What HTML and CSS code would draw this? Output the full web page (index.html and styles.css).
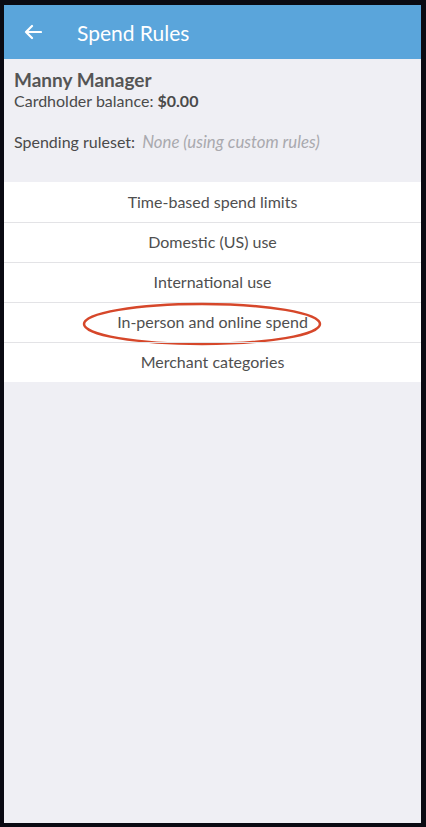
FILE: index.html
```html
<!DOCTYPE html>
<html>
<head>
<meta charset="utf-8">
<link rel="stylesheet" href="styles.css">
</head>
<body>
<div class="screen">
  <header class="topbar">
    <svg class="back" width="18" height="16" viewBox="0 0 18 16" fill="none" stroke="#fff" stroke-width="2.2" stroke-linecap="round" stroke-linejoin="round">
      <path d="M17 8H2M8 2L2 8l6 6"/>
    </svg>
    <h1 class="title">Spend Rules</h1>
  </header>
  <section class="info">
    <div class="name">Manny Manager</div>
    <div class="balance">Cardholder balance: <b>$0.00</b></div>
    <div class="ruleset">Spending ruleset: <i>None (using custom rules)</i></div>
  </section>
  <ul class="rules">
    <li>Time-based spend limits</li>
    <li>Domestic (US) use</li>
    <li>International use</li>
    <li class="circled">In-person and online spend
      <svg class="ellipse" width="246" height="46" viewBox="0 0 246 46"><ellipse cx="122" cy="23" rx="118" ry="20" fill="none" stroke="#d6472a" stroke-width="2.5"/></svg>
    </li>
    <li>Merchant categories</li>
  </ul>
</div>
</body>
</html>
```
FILE: styles.css
```css
html, body {
  margin: 0;
  padding: 0;
  background: #0a0a12;
}
body {
  padding: 5px 5px 4px 4px;
  font-family: Lato, "Open Sans", sans-serif;
}
.screen {
  width: 417px;
  height: 818px;
  background: #efeff4;
  display: flex;
  flex-direction: column;
}
.topbar {
  height: 54px;
  background: #5aa5db;
  display: flex;
  align-items: center;
  padding-left: 20px;
  box-sizing: border-box;
}
.back {
  display: block;
}
.title {
  margin: 0 0 0 35px;
  font-size: 21px;
  font-weight: 400;
  color: #fff;
}
.info {
  padding: 10px 10px 0 10px;
  color: #4a4a4a;
  height: 123px;
  box-sizing: border-box;
}
.name {
  font-size: 19px;
  font-weight: 700;
  color: #555;
  line-height: 22px;
}
.balance {
  font-size: 16px;
  line-height: 19px;
}
.balance b {
  font-weight: 700;
}
.ruleset {
  margin-top: 22px;
  font-size: 16px;
  line-height: 19px;
}
.ruleset i {
  color: #a9a9ae;
  font-size: 16.8px;
  margin-left: 3px;
}
.rules {
  list-style: none;
  margin: 0;
  padding: 0;
  background: #fff;
}
.rules li {
  height: 40px;
  padding-bottom: 2px;
  box-sizing: border-box;
  display: flex;
  align-items: center;
  justify-content: center;
  font-size: 16px;
  color: #4f4f4f;
  position: relative;
}
.rules li + li {
  border-top: 1px solid #e3e3e6;
}
.ellipse {
  position: absolute;
  left: 76px;
  top: -2px;
}
```
